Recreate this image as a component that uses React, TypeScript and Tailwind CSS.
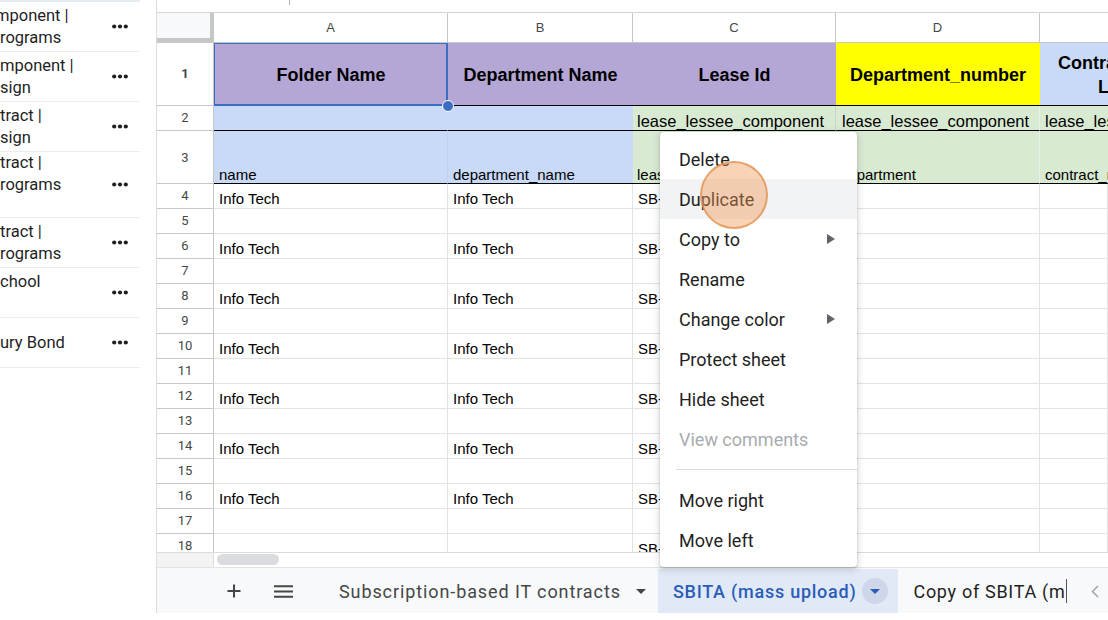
import React from "react";

const rh =
  "w-[57px] shrink-0 border-r border-b border-[#c7c7c7] bg-white flex items-center justify-center text-[13px] text-[#444746] font-['Roboto',sans-serif]";
const cell =
  "shrink-0 border-r border-b border-[#e2e3e3] flex items-end pl-[5px] pb-[1px] text-[15px] leading-[17px] text-black whitespace-nowrap overflow-hidden";

function Dots() {
  return (
    <svg width="16" height="5" viewBox="0 0 16 5">
      <circle cx="2.2" cy="2.5" r="2.1" fill="#1f1f1f" />
      <circle cx="8" cy="2.5" r="2.1" fill="#1f1f1f" />
      <circle cx="13.8" cy="2.5" r="2.1" fill="#1f1f1f" />
    </svg>
  );
}

function Arrow() {
  return (
    <svg width="8" height="10" viewBox="0 0 8 10">
      <polygon points="0,0 8,5 0,10" fill="#5f6368" />
    </svg>
  );
}

const sideRows: { h: string; lines: string[]; shift?: boolean }[] = [
  { h: "h-[50px]", lines: ["mponent |", "rograms"], shift: true },
  { h: "h-[50px]", lines: ["mponent |", "sign"] },
  { h: "h-[50px]", lines: ["tract |", "sign"] },
  { h: "h-[66px]", lines: ["tract |", "rograms", "\u00a0"] },
  { h: "h-[50px]", lines: ["tract |", "rograms"] },
  { h: "h-[50px]", lines: ["chool", "\u00a0"] },
  { h: "h-[50px]", lines: ["ury Bond"] },
];

const menuItems: { label: string; arrow?: boolean; hover?: boolean; disabled?: boolean }[] = [
  { label: "Delete" },
  { label: "Duplicate", hover: true },
  { label: "Copy to", arrow: true },
  { label: "Rename" },
  { label: "Change color", arrow: true },
  { label: "Protect sheet" },
  { label: "Hide sheet" },
  { label: "View comments", disabled: true },
];

export default function App() {
  const bodyRows = Array.from({ length: 15 }, (_, i) => i + 4);
  return (
    <div className="relative w-[1108px] h-[620px] overflow-hidden bg-white flex font-['Roboto',sans-serif]">
      {/* Sidebar */}
      <div className="w-[140px] shrink-0 flex flex-col overflow-hidden">
        <div className="h-[2px] bg-[#e6eaf1] shrink-0" />
        {sideRows.map((r, i) => (
          <div
            key={i}
            className={`${r.h} shrink-0 border-b border-[#ececec] flex items-center justify-between pr-[12px] text-[16.5px] leading-[22px] text-[#1f1f1f]`}
          >
            <div className="whitespace-nowrap pt-[1px]">
              {r.lines.map((l, j) => (
                <div key={j} className={r.shift && j === 0 ? "-ml-[5px]" : ""}>
                  {l}
                </div>
              ))}
            </div>
            <Dots />
          </div>
        ))}
      </div>
      <div className="w-[16px] shrink-0" />

      {/* Main sheet area */}
      <div className="flex-1 min-w-0 h-[613px] border-l border-[#dadce0] flex flex-col overflow-hidden">
        {/* formula strip */}
        <div className="h-[13px] shrink-0 border-b border-[#d5d5d5] relative">
          <div className="absolute left-[132px] top-0 w-px h-[5px] bg-[#b0b0b0]" />
        </div>

        {/* column header */}
        <div className="h-[30px] shrink-0 flex text-[13px] text-[#444746] font-['Liberation_Sans',Arial,sans-serif]">
          <div className="w-[57px] shrink-0 bg-[#f8f9fa] border-r-4 border-b-[5px] border-[#c4c7c5]" />
          <div className="w-[234px] shrink-0 border-r border-b border-[#c7c7c7] flex items-center justify-center pt-[1px]">A</div>
          <div className="w-[185px] shrink-0 border-r border-b border-[#c7c7c7] flex items-center justify-center pt-[1px]">B</div>
          <div className="w-[203px] shrink-0 border-r border-b border-[#c7c7c7] flex items-center justify-center pt-[1px]">C</div>
          <div className="w-[204px] shrink-0 border-r border-b border-[#c7c7c7] flex items-center justify-center pt-[1px]">D</div>
          <div className="flex-1 min-w-0 border-b border-[#c7c7c7]" />
        </div>

        {/* grid body */}
        <div className="h-[509px] shrink-0 overflow-hidden flex flex-col font-['Liberation_Sans',Arial,sans-serif]">
          {/* row 1 */}
          <div className="flex h-[63px] shrink-0 text-[18px] font-bold text-black">
            <div className={rh}>1</div>
            <div className="relative w-[234px] shrink-0 bg-[#b4a7d6] flex items-center justify-center pt-[1px]">
              Folder Name
              <div className="absolute inset-0 border-2 border-l border-t border-[#3b6ec2] pointer-events-none" />
              <div className="absolute -right-[6px] -bottom-[6px] w-[12px] h-[12px] rounded-full bg-[#3b6ec2] border border-white z-10" />
            </div>
            <div className="w-[185px] shrink-0 bg-[#b4a7d6] border-b border-black flex items-center justify-center whitespace-nowrap pt-[2px]">
              Department Name
            </div>
            <div className="w-[203px] shrink-0 bg-[#b4a7d6] border-b border-black flex items-center justify-center pt-[2px]">
              Lease Id
            </div>
            <div className="w-[204px] shrink-0 bg-[#ffff00] border-b border-black flex items-center justify-center whitespace-nowrap pt-[2px]">
              Department_number
            </div>
            <div className="flex-1 min-w-0 overflow-hidden bg-[#c9daf8] border-b border-black flex flex-col justify-center leading-[24px] whitespace-nowrap pt-[2px]">
              <div className="pl-[18px]">Contract Component</div>
              <div className="pl-[58px]">Lease Id</div>
            </div>
          </div>

          {/* row 2 */}
          <div className="flex h-[25px] shrink-0 text-[16.5px] leading-[18px] text-black">
            <div className={rh}>2</div>
            <div className="w-[234px] shrink-0 bg-[#c9daf8] border-r border-[#c9daf8] border-b border-b-black" />
            <div className="w-[185px] shrink-0 bg-[#c9daf8] border-b border-black" />
            <div className="w-[203px] shrink-0 bg-[#d9ead3] border-r border-r-[#c8d8c2] border-b border-b-black flex items-end pl-[4px] whitespace-nowrap overflow-hidden">
              lease_lessee_component
            </div>
            <div className="w-[204px] shrink-0 bg-[#d9ead3] border-r border-r-[#e8f1e5] border-b border-b-black flex items-end pl-[6px] whitespace-nowrap overflow-hidden">
              lease_lessee_component
            </div>
            <div className="flex-1 min-w-0 bg-[#d9ead3] border-b border-black flex items-end pl-[5px] whitespace-nowrap overflow-hidden">
              lease_lessee_component
            </div>
          </div>

          {/* row 3 */}
          <div className="flex h-[53px] shrink-0 text-[15px] leading-[17px] text-black">
            <div className={rh}>3</div>
            <div className="w-[234px] shrink-0 bg-[#c9daf8] border-r border-r-[#c0d2f0] border-b border-b-black flex items-end pl-[5px]">
              name
            </div>
            <div className="w-[185px] shrink-0 bg-[#c9daf8] border-b border-black flex items-end pl-[5px]">
              department_name
            </div>
            <div className="w-[203px] shrink-0 bg-[#d9ead3] border-r border-r-[#c8d8c2] border-b border-b-black flex items-end pl-[4px]">
              lease_id
            </div>
            <div className="w-[204px] shrink-0 bg-[#d9ead3] border-r border-r-[#e8f1e5] border-b border-b-black flex items-end pl-[4px]">
              department
            </div>
            <div className="flex-1 min-w-0 bg-[#d9ead3] border-b border-black flex items-end pl-[5px] whitespace-nowrap overflow-hidden">
              contract_number
            </div>
          </div>

          {bodyRows.map((n) => {
            const even = n % 2 === 0;
            const info = even && n < 18;
            return (
              <div key={n} className="flex h-[25px] shrink-0">
                <div className={rh}>{n}</div>
                <div className={`${cell} w-[234px]`}>{info ? "Info Tech" : ""}</div>
                <div className={`${cell} w-[185px]`}>{info ? "Info Tech" : ""}</div>
                <div className={`${cell} w-[203px] pl-[4px]`}>{even ? `SB-00${n}` : ""}</div>
                <div className={`${cell} w-[204px]`} />
                <div className={`${cell} flex-1 min-w-0`} />
              </div>
            );
          })}
        </div>

        {/* horizontal scrollbar band */}
        <div className="h-[15px] shrink-0 border-t border-[#dadce0] flex">
          <div className="w-[57px] shrink-0 bg-[#f3f3f3] border-r border-[#dadce0]" />
          <div className="ml-[3px] mt-[1px] w-[62px] h-[11px] rounded-full bg-[#dadce0]" />
        </div>

        {/* sheet tabs */}
        <div className="h-[46px] shrink-0 border-t border-[#e3e3e3] bg-[#f8f9fa] flex items-center text-[18px] tracking-[0.9px] overflow-hidden pt-[1px]">
          <svg className="ml-[70px] shrink-0" width="14" height="14" viewBox="0 0 14 14">
            <path d="M7 0.5V13.5M0.5 7H13.5" stroke="#444746" strokeWidth="2" />
          </svg>
          <svg className="ml-[33px] shrink-0" width="19" height="13" viewBox="0 0 19 13">
            <path d="M0 1.2H19M0 6.5H19M0 11.8H19" stroke="#444746" strokeWidth="1.9" />
          </svg>
          <div className="ml-[46px] shrink-0 text-[#444746] whitespace-nowrap">Subscription-based IT contracts</div>
          <svg className="ml-[15px] shrink-0" width="10" height="5" viewBox="0 0 10 5">
            <polygon points="0,0 10,0 5,5" fill="#444746" />
          </svg>
          <div className="ml-[12px] shrink-0 h-full -mt-[1px] bg-[#e1e9f7] flex items-center pl-[15px] pr-[10px] pt-[1px]">
            <span className="text-[#2a5db8] font-medium whitespace-nowrap tracking-[0.75px]">SBITA (mass upload)</span>
            <div className="ml-[6px] w-[26px] h-[26px] rounded-full bg-[#cdd7e9] flex items-center justify-center">
              <svg width="10" height="5" viewBox="0 0 10 5">
                <polygon points="0,0 10,0 5,5" fill="#2a5db8" />
              </svg>
            </div>
          </div>
          <div className="ml-[15px] shrink-0 text-[#1f1f1f] whitespace-nowrap tracking-[0.7px]">Copy of SBITA (m</div>
          <div className="shrink-0 w-px h-[24px] bg-[#555] ml-[1px]" />
          <svg className="ml-[24px] shrink-0" width="8" height="13" viewBox="0 0 8 13">
            <path d="M7 1L1.5 6.5L7 12" stroke="#a0a3a7" strokeWidth="1.5" fill="none" />
          </svg>
        </div>
      </div>

      {/* context menu */}
      <div className="absolute left-[660px] top-[132px] w-[197px] h-[435px] bg-white rounded-[4px] shadow-[0_2px_6px_2px_rgba(60,64,67,0.15),0_1px_2px_rgba(60,64,67,0.3)] py-[7px] text-[18px] text-[#1f1f1f] z-20">
        {menuItems.map((m) => (
          <div
            key={m.label}
            className={`h-[40px] flex items-center justify-between pl-[19px] pr-[22px] ${m.hover ? "bg-[#f1f3f4]" : ""} ${m.disabled ? "text-[#a8abaf]" : ""}`}
          >
            <span>{m.label}</span>
            {m.arrow ? <Arrow /> : null}
          </div>
        ))}
        <div className="my-[10px] ml-[16px] h-px bg-[#dadce0]" />
        <div className="h-[40px] flex items-center pl-[19px]">Move right</div>
        <div className="h-[40px] flex items-center pl-[19px]">Move left</div>
      </div>

      {/* click indicator */}
      <div className="absolute left-[700px] top-[161px] w-[68px] h-[68px] rounded-full bg-[rgba(240,150,80,0.42)] border-2 border-[rgba(225,145,80,0.75)] z-30" />
    </div>
  );
}
